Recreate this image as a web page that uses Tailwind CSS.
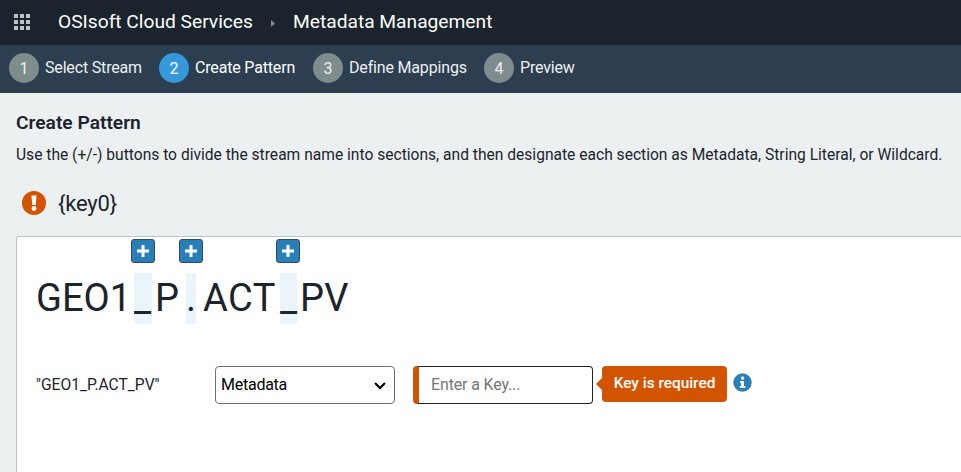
<!DOCTYPE html>
<html lang="en">
<head>
<meta charset="utf-8">
<title>Metadata Management</title>
<script src="https://cdn.jsdelivr.net/npm/@tailwindcss/browser@4"></script>
</head>
<body class="h-[472px] overflow-hidden bg-[#ecf0f1] font-['Roboto',sans-serif] text-[#1b242c]">
<header class="flex h-[45px] items-center bg-[#1b242c] pb-[2px] pl-[14px] text-[19.2px] text-white">
  <svg class="h-4 w-4 shrink-0" viewBox="0 0 16 16" fill="#bdc3c7"><path d="M0 0h4v4H0zM6 0h4v4H6zM12 0h4v4h-4zM0 6h4v4H0zM6 6h4v4H6zM12 6h4v4h-4zM0 12h4v4H0zM6 12h4v4H6zM12 12h4v4h-4z"/></svg>
  <span class="ml-[28px] w-[213px] whitespace-nowrap pt-px">OSIsoft Cloud Services</span>
  <svg class="mt-[3px] h-[7px] w-[4px]" viewBox="0 0 4 7" fill="#7f8c8d"><path d="M0 0l4 3.500-4 3.500z"/></svg>
  <span class="ml-[18px] whitespace-nowrap pt-px">Metadata Management</span>
</header>
<nav class="flex h-12 items-center bg-[#2d3e50] pb-[2px] pl-[9px] text-base tracking-[-0.17px] text-[#ecf0f1]">
  <div class="flex w-[150px] items-center gap-[6px]"><span class="flex h-[30px] w-[30px] shrink-0 items-center justify-center rounded-full bg-[#7f8c8d] pt-px">1</span><span class="whitespace-nowrap">Select Stream</span></div>
  <div class="flex w-[154px] items-center gap-[6px] text-white"><span class="flex h-[30px] w-[30px] shrink-0 items-center justify-center rounded-full bg-[#3498db] pt-px">2</span><span class="whitespace-nowrap">Create Pattern</span></div>
  <div class="flex w-[171px] items-center gap-[6px]"><span class="flex h-[30px] w-[30px] shrink-0 items-center justify-center rounded-full bg-[#7f8c8d] pt-px">3</span><span class="whitespace-nowrap">Define Mappings</span></div>
  <div class="flex items-center gap-[6px]"><span class="flex h-[30px] w-[30px] shrink-0 items-center justify-center rounded-full bg-[#7f8c8d] pt-px">4</span><span>Preview</span></div>
</nav>
<main class="pl-4">
  <h1 class="pt-[18px] text-[19.2px] font-semibold leading-6">Create Pattern</h1>
  <p class="mt-2 whitespace-nowrap text-[15.6px] leading-6">Use the (+/-) buttons to divide the stream name into sections, and then designate each section as Metadata, String Literal, or Wildcard.</p>
  <div class="mt-[20px] flex h-8 items-center gap-3 pl-[6px] text-[22px] tracking-[-0.2px]">
    <svg class="h-6 w-6" viewBox="0 0 24 24"><circle cx="12" cy="12" r="12" fill="#d35400"/><path d="M9.500 4.500h5l-.7 9.500h-3.600z" fill="#fff"/><circle cx="12" cy="17.500" r="2.400" fill="#fff"/></svg>
    <span>{key0}</span>
  </div>
  <section class="mt-[17px] h-[236px] rounded-tl-[3px] border-l border-t border-[#bdc3c7] bg-white">
    <div class="flex h-[26px] pl-[114px] pt-[2px]">
      <button class="mr-6 flex h-6 w-6 items-center justify-center rounded-[3px] border border-[#34495e] bg-[#2980b9]"><svg class="h-3 w-3" viewBox="0 0 12 12"><path d="M6 0v12M0 6h12" stroke="#fff" stroke-width="3"/></svg></button>
      <button class="mr-[73px] flex h-6 w-6 items-center justify-center rounded-[3px] border border-[#34495e] bg-[#2980b9]"><svg class="h-3 w-3" viewBox="0 0 12 12"><path d="M6 0v12M0 6h12" stroke="#fff" stroke-width="3"/></svg></button>
      <button class="flex h-6 w-6 items-center justify-center rounded-[3px] border border-[#34495e] bg-[#2980b9]"><svg class="h-3 w-3" viewBox="0 0 12 12"><path d="M6 0v12M0 6h12" stroke="#fff" stroke-width="3"/></svg></button>
    </div>
    <div class="mt-[10px] flex h-[51px] whitespace-nowrap pl-[18px] text-[38px] leading-[51px]">
      <span class="w-[99px] pl-px">GEO1</span><span class="w-[18px] bg-[#e9f4fb]">_</span><span class="w-[34px] pl-[3px]">P</span><span class="w-[10px] bg-[#e9f4fb]">.</span><span class="w-[84px] pl-[7px] tracking-[0.5px]">ACT</span><span class="w-[17px] bg-[#e9f4fb]">_</span><span class="pl-[3px] tracking-[0.3px]">PV</span>
    </div>
    <div class="mt-[42px] flex items-start text-base">
      <span class="w-[198px] pl-[19px] text-[15.6px] leading-[38px]">"GEO1_P.ACT_PV"</span>
      <div class="flex h-[38px] w-[180px] items-center justify-between rounded-[4px] border border-[#6b7278] pl-[5px] pr-[8px] tracking-[-0.25px] text-black"><span>Metadata</span><svg class="mt-px h-2 w-3" viewBox="0 0 12 8"><path d="M1 1l5 5 5-5" fill="none" stroke="#000" stroke-width="2"/></svg></div>
      <div class="ml-[18px] flex h-[38px] w-[180px] items-center rounded-[4px] border border-l-[6px] border-[#1b242c] border-l-[#d35400] pl-[12px] tracking-[-0.15px] text-[#757575]">Enter a Key...</div>
      <svg class="ml-[3px] mt-[12px] h-3 w-[6px]" viewBox="0 0 6 12" fill="#d35400"><path d="M6 0v12L0 6z"/></svg>
      <div class="h-9 w-[125px] rounded-[4px] bg-[#d35400] text-center text-[15.4px] font-medium leading-[34px] text-white">Key is required</div>
      <svg class="ml-[6px] mt-[7px] h-[19px] w-[19px]" viewBox="0 0 19 19"><circle cx="9.500" cy="9.500" r="9.200" fill="#2980b9"/><path d="M7 8h4v5h1.300v2H6.800v-2h1.300v-3H7z" fill="#fff"/><circle cx="9.600" cy="5" r="1.700" fill="#fff"/></svg>
    </div>
  </section>
</main>
</body>
</html>
